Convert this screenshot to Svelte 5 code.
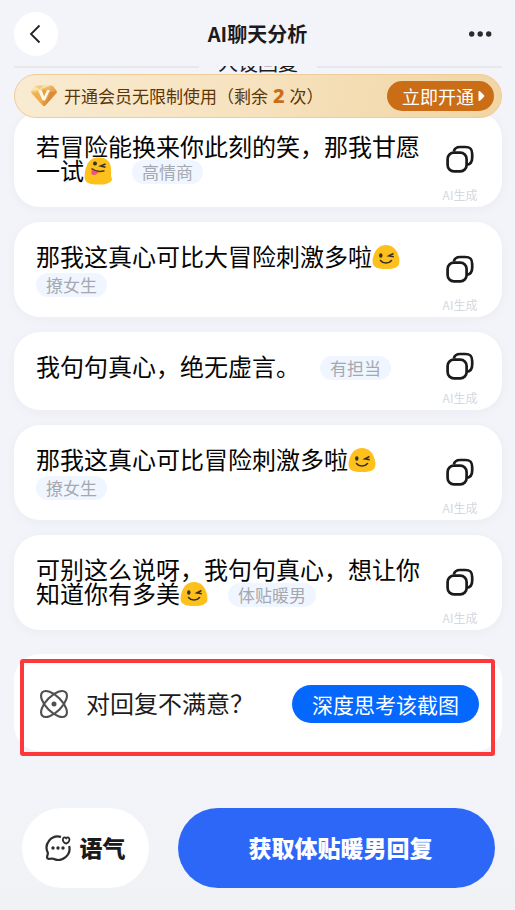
<script>
  const replies = [
    { text: '若冒险能换来你此刻的笑，那我甘愿一试', emoji: 'tongue', tag: '高情商' },
    { text: '那我这真心可比大冒险刺激多啦', emoji: 'wink', tag: '撩女生', below: true },
    { text: '我句句真心，绝无虚言。', tag: '有担当', compact: true },
    { text: '那我这真心可比冒险刺激多啦', emoji: 'wink', tag: '撩女生', below: true },
    { text: '可别这么说呀，我句句真心，想让你知道你有多美', emoji: 'wink', tag: '体贴暖男' }
  ];
</script>

<div class="page">
  <header>
    <button class="back" aria-label="返回">
      <svg width="44" height="44" viewBox="0 0 44 44"><path d="M25.500 13.500 17 22l8.500 8.500" fill="none" stroke="#222" stroke-width="1.800" /></svg>
    </button>
    <h1>AI聊天分析</h1>
    <button class="more" aria-label="更多">
      <svg width="24" height="8" viewBox="0 0 24 8" fill="#2b2b2d"><circle cx="3.700" cy="4" r="2.700" /><circle cx="12.200" cy="4" r="2.700" /><circle cx="20.700" cy="4" r="2.700" /></svg>
    </button>
  </header>

  <main>
    <div class="section"><i></i><h2>人设回复</h2><i></i></div>

    <div class="vip">
      <svg width="28" height="24" viewBox="0 0 28 24">
        <defs>
          <linearGradient id="gem" x1="0" y1="0" x2="1" y2="1"><stop offset="0" stop-color="#fbdc91" /><stop offset="1" stop-color="#d6781f" /></linearGradient>
        </defs>
        <path d="M6.500 1.500h15a2 2 0 0 1 1.600.8l3.500 4.400a2 2 0 0 1-.1 2.500L15.300 21.500a1.800 1.800 0 0 1-2.600 0L1.500 9.200a2 2 0 0 1-.1-2.500l3.500-4.400a2 2 0 0 1 1.600-.8Z" fill="url(#gem)" />
        <path d="M5 2.200 9 5l5-3.500h7.500L14 4 9 6 1.500 7Z" fill="#ffe9ae" opacity=".8" />
        <path d="M1.200 8 8 9l6 13-1.300-.5Z" fill="#efae4c" opacity=".8" />
        <path d="M8 6h12l-6 15.500Z" fill="#e09a3c" opacity=".7" />
        <path d="m20 8 6.700-.5L15.300 21.500Z" fill="#d98633" opacity=".8" />
        <path d="M8 6h3.700l2.400 6.400L17 6h3l-5 10.500h-2.500Z" fill="#fff7e4" />
      </svg>
      <p>开通会员无限制使用（剩余<b>2</b>次）</p>
      <button>立即开通<svg width="7" height="12" viewBox="0 0 7 12"><path d="M.5 2.200C.5.800 1.500.600 2.300 1.500L6 5.200q.8.800 0 1.600L2.300 10.500C1.500 11.400.5 11.200.5 9.800Z" fill="#fff" /></svg></button>
    </div>

    <div class="list">
      {#each replies as r}
        <article class:compact={r.compact}>
          <p class="reply">{r.text}{#if r.emoji === 'tongue'}<svg class="emoji" width="28" height="28" viewBox="0 0 28 28" role="img" aria-label="吐舌眨眼"><path d="M3 8C5 3 9 .5 15 .5c7.500 0 12 4.500 12 11.500 0 5-.2 7 .8 9.500.8 2-.8 3-2.300 4C22 27.500 18 27.700 12 27.500 4 27.200.6 25 .6 20 .6 15 1.400 11.500 3 8Z" fill="#fdc01c" /><circle cx="11" cy="6.500" r="2" fill="#352f2d" /><path d="m21.500 7-5 2 5 1.300" fill="none" stroke="#352f2d" stroke-width="1.500" /><path d="M7.500 11.500c3 2.500 8 3.500 13 2.300" fill="none" stroke="#4c342a" stroke-width="1.500" /><path d="M8 13c2 1.200 4.300 1.700 6.500 1.800-.8 2-2.500 3.200-5 3.100-2.300-.1-2.800-2.800-1.500-4.900Z" fill="#ee5087" /></svg>{:else if r.emoji}<svg class="emoji" width="28" height="28" viewBox="0 0 28 28" role="img" aria-label="眨眼"><path d="M14 2C7 2 2.500 7 .8 15.500-.2 22.500 2 26 14 26s14.200-3.500 13.200-10.500C25.500 7 21 2 14 2Z" fill="#fdc01c" /><ellipse cx="8.800" cy="12.500" rx="1.700" ry="2.200" fill="#352f2d" /><path d="m21.500 10.500-4.700 2.300 5 .9" fill="none" stroke="#352f2d" stroke-width="1.500" /><path d="M8.500 17.500c2.500 3.300 8.200 3.500 11 0" fill="none" stroke="#352f2d" stroke-width="1.600" stroke-linecap="round" /></svg>{/if}<span class="tag" class:below={r.below}>{r.tag}</span></p>
          <div class="side">
            <button class="copy" aria-label="复制">
              <svg width="28" height="28" viewBox="0 0 28 28" fill="none" stroke="#1b1b1d" stroke-width="2.700"><path d="M7.800 6.500C8.500 3.500 10.500 2 14 2h5.200C24.500 2 26.200 3.800 26.200 9v3.500c0 4.500-1.500 6.800-5.500 7.300" /><rect x="1.600" y="7.600" width="19" height="18.800" rx="6.300" /></svg>
            </button>
            <small>AI生成</small>
          </div>
        </article>
      {/each}
    </div>

    <section class="unhappy">
      <div class="mark">
        <svg width="28" height="28" viewBox="0 0 28 28" fill="none" stroke="#505052" stroke-width="2.100"><ellipse cx="14" cy="14" rx="16.500" ry="7.800" transform="rotate(45 14 14)" /><ellipse cx="14" cy="14" rx="16.500" ry="7.800" transform="rotate(-45 14 14)" /><circle cx="14" cy="14" r="2.500" fill="#505052" stroke="none" /></svg>
        <p>对回复不满意？</p>
        <button>深度思考该截图</button>
      </div>
    </section>
  </main>

  <footer>
    <button class="tone">
      <svg width="26" height="26" viewBox="0 0 26 26" fill="none" stroke="#2c2d2e" stroke-width="2.200"><path d="M16 1.900A11.300 11.300 0 0 0 2.800 17.800c.5 1-.9 2.800-.7 4.600.1 1.200 1 1.700 2.200 1.500 1.500-.2 2.600-.6 4-.1A11.300 11.300 0 0 0 24.200 11" /><path d="M18.200 3.300c1-1.600 2.300-1 3 0 .9-1.100 2.200-1.300 3 .1.800 1.700-.3 4.600-3.100 5.100-2.700-.4-3.900-3.300-2.900-5.200Z" stroke-width="1.800" /><g fill="#2c2d2e" stroke="none"><circle cx="8" cy="13" r="1.700" /><circle cx="13" cy="13" r="1.700" /><circle cx="18" cy="13" r="1.700" /></g></svg>
      <span>语气</span>
    </button>
    <button class="get"><span>获取体贴暖男回复</span></button>
  </footer>
</div>

<style>
  :global(body) { background: #f3f4f9; }
  .page, .page * { box-sizing: border-box; }
  .page {
    min-height: 100vh;
    display: flex;
    flex-direction: column;
    background: linear-gradient(#f3f4f9 85%, #f1f2f5);
    font-family: "Noto Sans CJK SC", sans-serif;
    color: #1b1b1d;
  }
  h1, h2, p { margin: 0; font-weight: 400; }
  button { border: 0; padding: 0; font: inherit; color: inherit; cursor: pointer; }
  svg { display: block; flex: none; }

  header {
    height: 66px;
    padding: 2px 23px 0 14px;
    display: grid;
    grid-template-columns: 1fr auto 1fr;
    align-items: center;
  }
  .back { width: 44px; height: 44px; border-radius: 50%; background: #fff; }
  h1 { font-size: 20px; line-height: 28px; font-weight: 700; padding-left: 9px; }
  .more { justify-self: end; background: none; }

  main { padding: 0 13px 0 14px; }
  .section { height: 8px; overflow: hidden; display: flex; align-items: flex-end; padding-bottom: 1px; }
  .section i { flex: 1; height: 2px; align-self: flex-start; background: #e7e8ec; }
  h2 { font-size: 20px; line-height: 20px; padding: 0 19px; }

  .vip {
    position: relative;
    z-index: 1;
    height: 44px;
    padding: 0 7px 0 15px;
    display: flex;
    align-items: center;
    border: 1px solid #f0cd98;
    border-radius: 22px;
    background: linear-gradient(100deg, #f9ebd2, #f6e2be 50%, #f1d5a3);
  }
  .vip p { flex: 1; padding-left: 6px; font-size: 17px; line-height: 24px; color: #5c3608; white-space: nowrap; }
  .vip b { font: 800 20px/20px "Noto Sans", sans-serif; color: #cb6d16; padding: 0 5px; }
  .vip button {
    display: flex;
    align-items: center;
    gap: 4px;
    height: 30px;
    padding: 0 9px 0 15px;
    border-radius: 15px;
    background: #cb6d16;
    color: #fff;
    font-size: 18px;
    line-height: 28px;
    white-space: nowrap;
  }

  .list { display: flex; flex-direction: column; gap: 15px; margin-top: -6px; }
  article {
    display: flex;
    min-height: 95px;
    padding-left: 22px;
    border-radius: 26px;
    background: #fff;
    box-shadow: 0 2px 12px #1c28500a;
  }
  .reply { flex: 1; min-width: 0; padding-top: 22px; font-size: 24px; line-height: 24px; color: #050505; }
  .emoji { display: inline-block; vertical-align: top; margin: -1px 0 -3px; }
  .tag {
    display: inline-block;
    vertical-align: top;
    margin: 2px 0 0 20px;
    padding: 0 10px;
    border-radius: 12px;
    background: #f0f6ff;
    color: #a5a8af;
    font-size: 17px;
    line-height: 24px;
  }
  .below { display: table; margin: 5px 0 0; }
  .side { flex: none; width: 76px; margin-right: 4px; padding: 20px 0 4px; display: flex; flex-direction: column; align-items: center; }
  .copy { flex: 1; display: flex; align-items: center; background: none; }
  small { font-size: 12px; line-height: 17px; color: #d5d8e1; }
  .compact { min-height: 78px; }
  .compact .side { padding-top: 10px; }

  .unhappy { margin-top: 24px; border-radius: 26px; background: #fff; }
  .mark {
    position: relative;
    top: 5px;
    margin: 0 7px 0 6px;
    height: 97px;
    padding: 0 12px 8px 16px;
    display: flex;
    align-items: center;
    border: 4px solid #fc383b;
    border-radius: 3px;
  }
  .mark p { flex: 1; padding: 0 0 2px 18px; font-size: 24px; line-height: 32px; white-space: nowrap; }
  .mark button { height: 38px; padding: 0 20px; border-radius: 19px; background: #0468ff; color: #fff; font-size: 21px; line-height: 36px; white-space: nowrap; }

  footer { margin-top: auto; padding: 0 20px 22px 22px; display: flex; gap: 29px; }
  footer button { height: 80px; border-radius: 40px; font-size: 23px; font-weight: 900; white-space: nowrap; display: flex; align-items: center; justify-content: center; }
  footer span { padding-bottom: 3px; }
  .tone { flex: 2; gap: 8px; background: #fff; }
  .get { flex: 5; background: #2d67f8; color: #fff; }
  .get span { padding-left: 8px; }
</style>
